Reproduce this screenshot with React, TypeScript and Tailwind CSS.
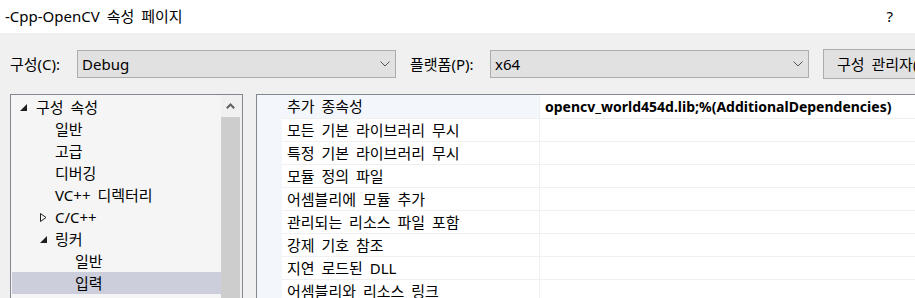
import React from "react";

const font = { fontFamily: '"Noto Sans", "Noto Sans CJK KR", sans-serif' };

function Chevron() {
  return (
    <svg width="10" height="6" viewBox="0 0 10 6" className="shrink-0">
      <path d="M0.5 0.5 L5 5 L9.5 0.5" fill="none" stroke="#555" strokeWidth="1" />
    </svg>
  );
}

function Combo({ value, width }: { value: string; width: string }) {
  return (
    <div className={`${width} h-[28px] bg-[#e1e1e1] border border-[#adadad] flex items-center justify-between pl-[4px] pr-[5px] shrink-0`}>
      <span className="text-[15px] leading-none text-[#000]">{value}</span>
      <Chevron />
    </div>
  );
}

function Expanded() {
  return (
    <svg width="7" height="7" viewBox="0 0 7 7" className="shrink-0">
      <path d="M7 0 L7 7 L0 7 Z" fill="#1e1e1e" />
    </svg>
  );
}

function Collapsed() {
  return (
    <svg width="7" height="9" viewBox="0 0 7 9" className="shrink-0">
      <path d="M0.5 0.5 L6 4.5 L0.5 8.5 Z" fill="none" stroke="#1e1e1e" strokeWidth="1" />
    </svg>
  );
}

type TreeItem = { label: string; indent: number; icon?: "exp" | "col"; selected?: boolean };

const tree: TreeItem[] = [
  { label: "구성 속성", indent: 0, icon: "exp" },
  { label: "일반", indent: 1 },
  { label: "고급", indent: 1 },
  { label: "디버깅", indent: 1 },
  { label: "VC++ 디렉터리", indent: 1 },
  { label: "C/C++", indent: 1, icon: "col" },
  { label: "링커", indent: 1, icon: "exp" },
  { label: "일반", indent: 2 },
  { label: "입력", indent: 2, selected: true },
];

const props = [
  "추가 종속성",
  "모든 기본 라이브러리 무시",
  "특정 기본 라이브러리 무시",
  "모듈 정의 파일",
  "어셈블리에 모듈 추가",
  "관리되는 리소스 파일 포함",
  "강제 기호 참조",
  "지연 로드된 DLL",
  "어셈블리와 리소스 링크",
];

export default function App() {
  return (
    <div className="w-[915px] h-[298px] overflow-hidden flex flex-col bg-[#f0f0f0] text-[#000] [word-spacing:3px]" style={font}>
      {/* Title bar */}
      <div className="h-[33px] bg-white flex items-center justify-between pl-[5px] pr-[22px] shrink-0">
        <span className="text-[15px] leading-none whitespace-nowrap">-Cpp-OpenCV 속성 페이지</span>
        <span className="text-[15px] leading-none">?</span>
      </div>

      {/* Toolbar */}
      <div className="flex items-center mt-[16px] h-[30px] shrink-0">
        <span className="ml-[10px] w-[67px] shrink-0 text-[15px] leading-none whitespace-nowrap">구성(C):</span>
        <Combo value="Debug" width="w-[319px]" />
        <span className="ml-[14px] w-[80px] shrink-0 text-[15px] leading-none whitespace-nowrap">플랫폼(P):</span>
        <Combo value="x64" width="w-[319px]" />
        <div className="ml-[14px] w-[130px] h-[30px] bg-[#e1e1e1] border border-[#adadad] flex items-center pl-[13px] shrink-0">
          <span className="text-[15px] leading-none whitespace-nowrap">구성 관리자(O)...</span>
        </div>
      </div>

      {/* Panels */}
      <div className="flex mt-[15px] flex-1 min-h-0">
        {/* Tree */}
        <div className="ml-[10px] w-[233px] border border-[#828790] bg-[#f5f5f5] flex shrink-0 h-[230px]">
          <div className="flex-1 flex flex-col pt-[1px] pl-[1px]">
            {tree.map((t, i) => (
              <div
                key={i}
                className={`h-[22px] flex items-center shrink-0 ${t.selected ? "bg-[#cccedb]" : ""}`}
              >
                <div
                  className={`flex items-center justify-start shrink-0 ${
                    t.indent === 0 ? "w-[24px] pl-[8px]" : t.indent === 1 ? "w-[43px] pl-[28px]" : "w-[63px]"
                  }`}
                >
                  {t.icon === "exp" && <Expanded />}
                  {t.icon === "col" && <Collapsed />}
                </div>
                <span className="text-[15px] leading-none whitespace-nowrap">{t.label}</span>
              </div>
            ))}
          </div>
          <div className="w-[21px] flex flex-col bg-[#f0f0f0] shrink-0">
            <div className="h-[22px] w-[19px] flex items-center justify-center">
              <svg width="9" height="6" viewBox="0 0 9 6">
                <path d="M0.8 5.2 L4.5 1.5 L8.2 5.2" fill="none" stroke="#606060" strokeWidth="2" />
              </svg>
            </div>
            <div className="w-[19px] flex-1 bg-[#cdcdcd]" />
          </div>
        </div>

        {/* Property grid */}
        <div className="ml-[13px] w-[700px] border border-[#828790] bg-[#f3f6fb] shrink-0 h-[230px] overflow-hidden">
          <div className="flex flex-col">
            {props.map((p, i) => (
              <div key={i} className={`flex shrink-0 ${i === 0 ? "h-[24px]" : "h-[23px]"}`}>
                <div className="w-[25px] shrink-0" />
                <div
                  className={`w-[258px] shrink-0 flex items-center pl-[5px] border-r border-b border-[#f0f0f0] ${
                    i === 0 ? "bg-[#f3f6fb]" : "bg-white"
                  }`}
                >
                  <span className="text-[15px] leading-none whitespace-nowrap">{p}</span>
                </div>
                <div className="flex-1 bg-white flex items-center pl-[5px] border-b border-[#f0f0f0]">
                  {i === 0 && (
                    <span className="text-[14px] leading-none font-bold whitespace-nowrap [word-spacing:0px]">
                      opencv_world454d.lib;%(AdditionalDependencies)
                    </span>
                  )}
                </div>
              </div>
            ))}
          </div>
        </div>
      </div>
    </div>
  );
}
